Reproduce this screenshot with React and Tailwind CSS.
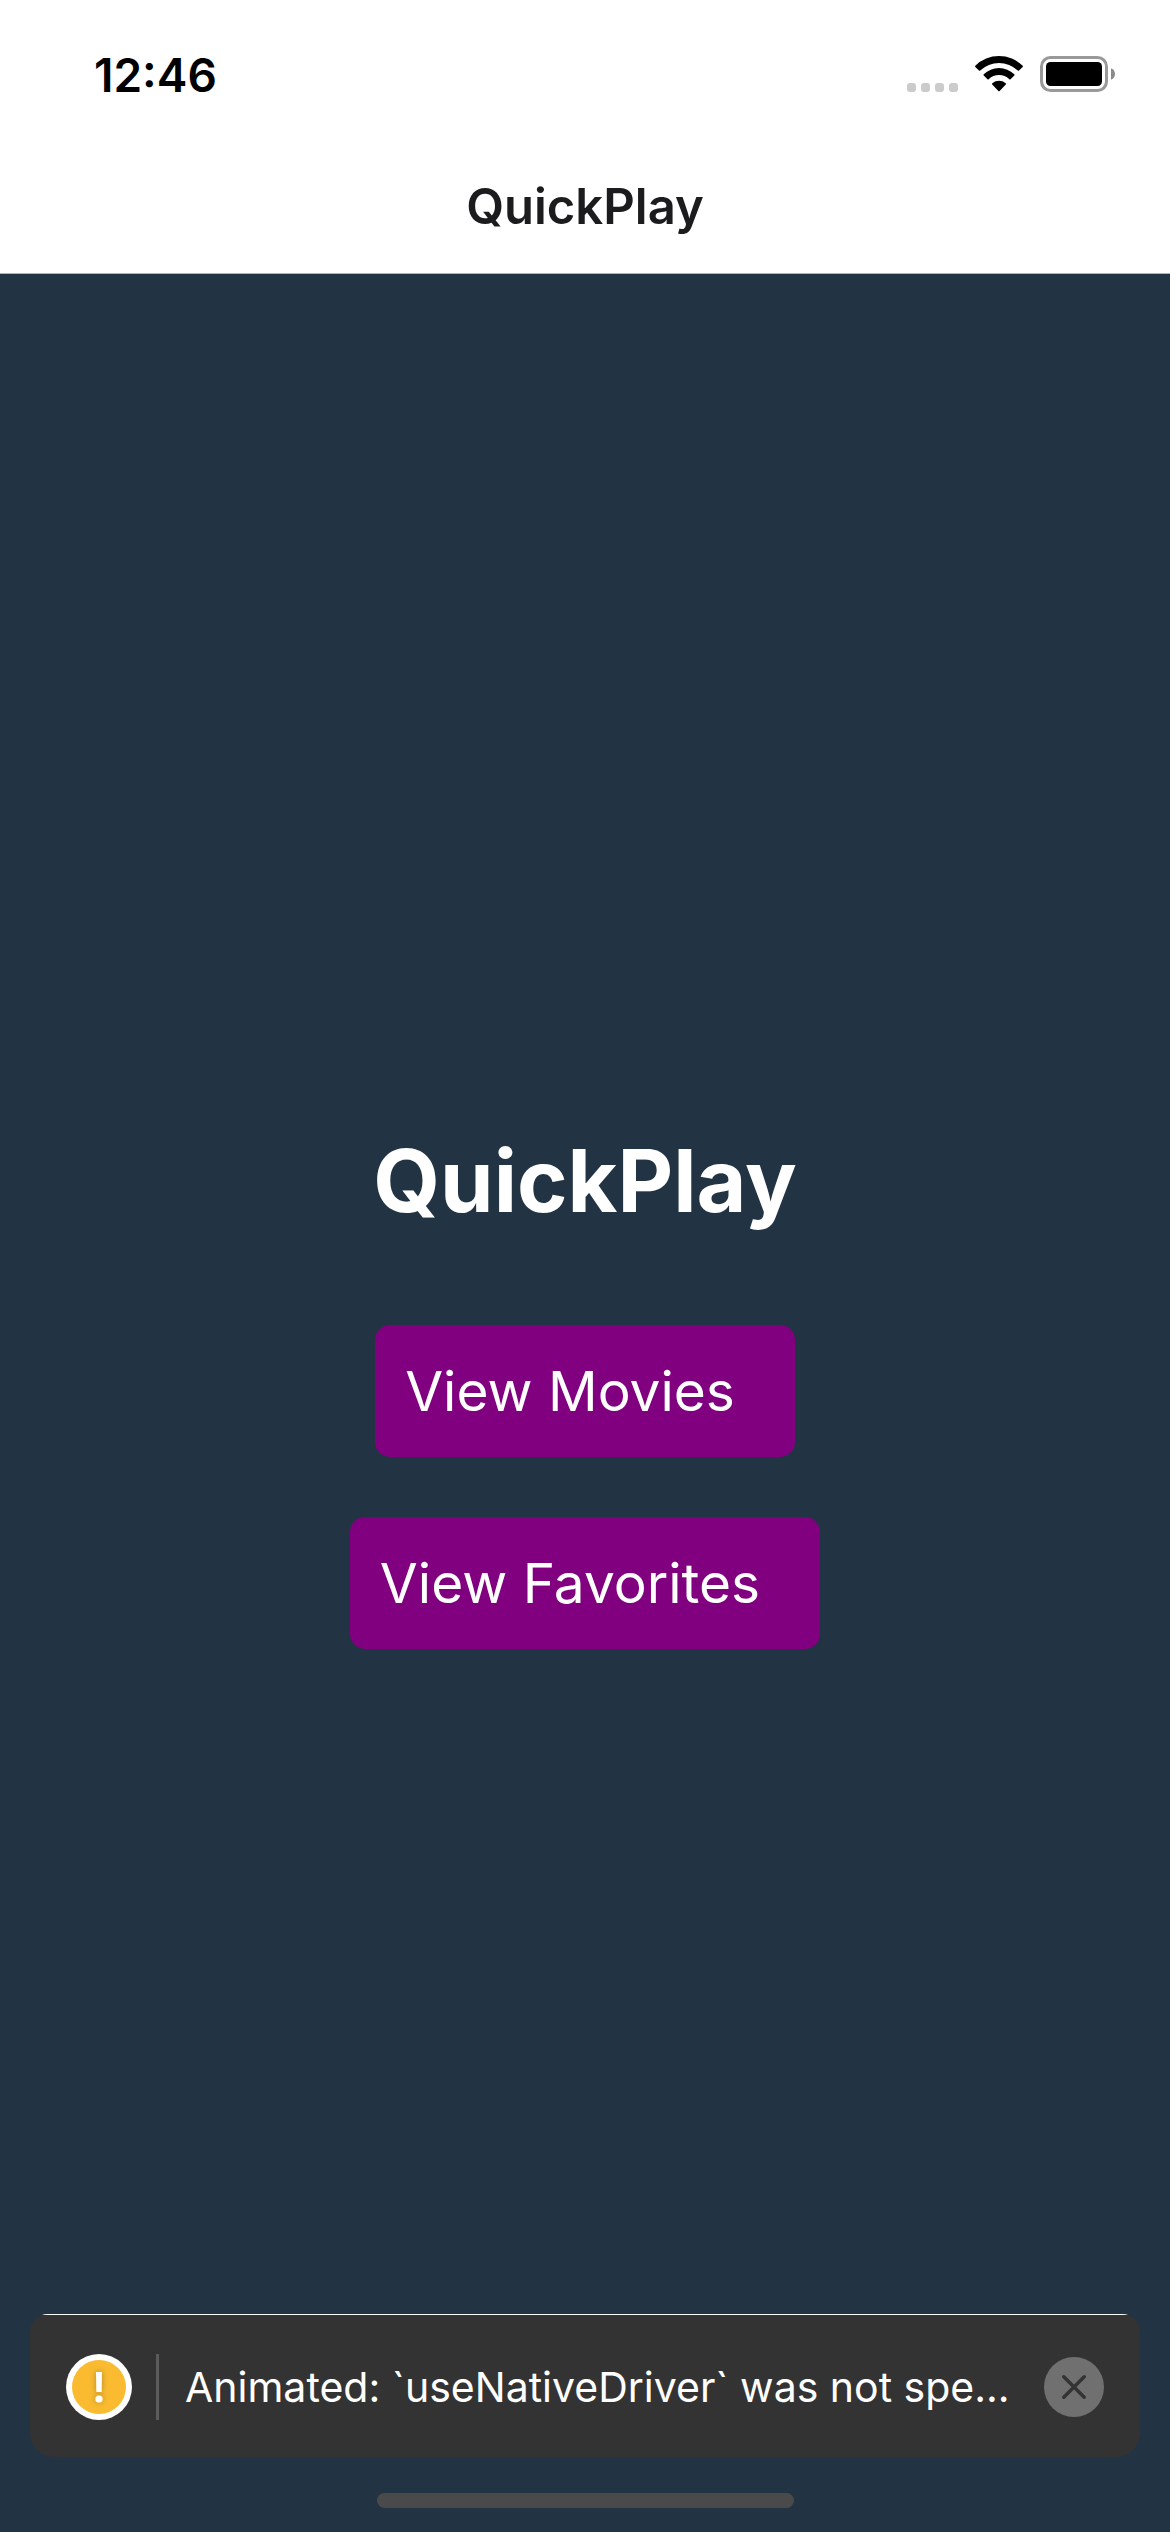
function SignalDots() {
  return (
    <div className="flex gap-[5px] pt-[26px]" aria-hidden="true">
      <span className="size-[9px] rounded-[3px] bg-[#cbcbcb]" />
      <span className="size-[9px] rounded-[3px] bg-[#cbcbcb]" />
      <span className="size-[9px] rounded-[3px] bg-[#cbcbcb]" />
      <span className="size-[9px] rounded-[3px] bg-[#cbcbcb]" />
    </div>
  );
}

function WifiIcon() {
  return (
    <svg width="50" height="36" viewBox="0 0 50 36" role="img" aria-label="Wi-Fi">
      <path d="M1.3 9.7A34 34 0 0 1 48.7 9.7Q49.2 10.3 48.7 10.9L45 14.6Q44.4 15.1 43.8 14.6A27.2 27.2 0 0 0 6.2 14.6Q5.6 15.1 5 14.6L1.3 10.9Q0.8 10.3 1.3 9.7Z" />
      <path d="M9.7 18.3A22 22 0 0 1 40.3 18.3Q40.8 18.9 40.3 19.5L36.5 23.2Q35.9 23.7 35.3 23.2A15 15 0 0 0 14.7 23.2Q14.1 23.7 13.5 23.2L9.7 19.5Q9.2 18.9 9.7 18.3Z" />
      <path d="M18.2 28.4Q17.7 27.9 18.3 27.3A10.4 10.4 0 0 1 31.7 27.3Q32.3 27.9 31.8 28.4L25.6 34.9Q25 35.5 24.4 34.9Z" />
    </svg>
  );
}

function BatteryIcon() {
  return (
    <svg width="76" height="36" viewBox="0 0 76 36" role="img" aria-label="Battery full">
      <rect x="1.5" y="1.5" width="65" height="33" rx="9" fill="none" stroke="#999999" strokeWidth="3" />
      <rect x="6" y="6" width="56" height="24" rx="4.5" />
      <path d="M71 12.2Q75 14 75 18Q75 22 71 23.8Z" fill="#8a8a8a" />
    </svg>
  );
}

function StatusBar() {
  return (
    <div className="flex h-[141px] items-start justify-between pt-[46px] pr-[54px] pl-[94px]">
      <time className="text-[46px] leading-[58px] font-semibold text-black">12:46</time>
      <div className="flex h-[56px] items-center gap-4">
        <SignalDots />
        <div className="flex items-center gap-4">
          <WifiIcon />
          <BatteryIcon />
        </div>
      </div>
    </div>
  );
}

function PrimaryButton({ children }) {
  return (
    <button
      type="button"
      className="my-[30px] rounded-[15px] bg-[#800080] py-[30px] pr-[60px] pl-[30px] text-[55px] leading-[72px] text-white"
    >
      {children}
    </button>
  );
}

function WarningToast() {
  return (
    <div role="alert" className="mx-[30px] overflow-hidden rounded-t-[18px] rounded-b-3xl bg-[#333333]">
      <div className="h-px bg-white" />
      <div className="flex h-[142px] items-center px-9 pt-0.5">
        <svg className="shrink-0" width="66" height="66" viewBox="0 0 66 66" aria-hidden="true">
          <defs>
            <filter id="mark-shadow" x="-200%" y="-50%" width="500%" height="200%">
              <feDropShadow dx="0" dy="0" stdDeviation="3" floodColor="#000000" floodOpacity="0.3" />
            </filter>
          </defs>
          <circle cx="33" cy="33" r="33" fill="#ffffff" />
          <circle cx="33" cy="33" r="27" fill="#fabb30" />
          <g fill="#ffffff" filter="url(#mark-shadow)">
            <path d="M30 18H36L35.6 38H30.4Z" />
            <circle cx="33" cy="45" r="3.6" />
          </g>
        </svg>
        <div className="ml-6 h-[66px] w-[3px] shrink-0 bg-[#5b5b5b]" />
        <p className="ml-[26px] min-w-0 flex-1 overflow-hidden text-[41px] leading-[56px] whitespace-nowrap text-white">
          Animated: `useNativeDriver` was not spe...
        </p>
        <button
          type="button"
          aria-label="Dismiss"
          className="flex size-[60px] shrink-0 items-center justify-center rounded-full bg-[#707070]"
        >
          <svg width="24" height="24" viewBox="0 0 24 24" fill="none" stroke="#333333" strokeWidth="3.4" strokeLinecap="round">
            <path d="M1.8 1.8L22.2 22.2M22.2 1.8L1.8 22.2" />
          </svg>
        </button>
      </div>
    </div>
  );
}

export default function App() {
  return (
    <div className="relative flex min-h-screen flex-col bg-[#223343] font-['Inter',sans-serif]">
      <header className="border-b border-[#aeb3b7] bg-white">
        <StatusBar />
        <div className="flex h-[132px] items-center justify-center text-[49px] leading-[60px] font-semibold text-[#1c1c1e]">
          QuickPlay
        </div>
      </header>
      <main className="flex flex-1 flex-col items-center justify-center">
        <h1 className="pb-[60px] text-[86px] leading-[107px] font-bold text-white">QuickPlay</h1>
        <PrimaryButton>View Movies</PrimaryButton>
        <PrimaryButton>View Favorites</PrimaryButton>
      </main>
      <footer className="absolute inset-x-0 bottom-0 flex flex-col gap-9 pb-6">
        <WarningToast />
        <div className="mx-auto h-[15px] w-[417px] rounded-full bg-[#4a4a4a]" />
      </footer>
    </div>
  );
}
